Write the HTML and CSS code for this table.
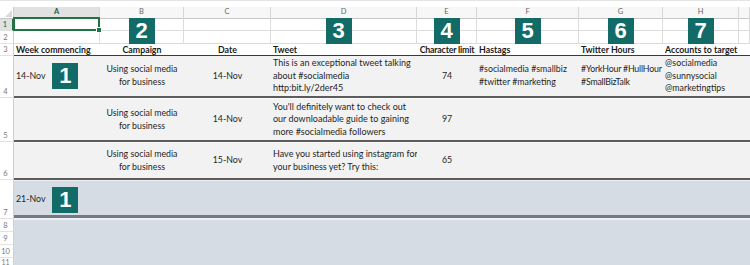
FILE: index.html
```html
<!DOCTYPE html>
<html>
<head>
<meta charset="utf-8">
<link rel="stylesheet" href="styles.css">
</head>
<body>
<div class="sheet">
  <div class="topband"></div>
  <div class="row colhead">
    <div class="corner"><span class="tri"></span></div>
    <div class="ch active">A</div>
    <div class="ch">B</div>
    <div class="ch">C</div>
    <div class="ch">D</div>
    <div class="ch">E</div>
    <div class="ch">F</div>
    <div class="ch">G</div>
    <div class="ch">H</div>
    <div class="ch"></div>
  </div>
  <div class="row r1">
    <div class="rh active">1</div>
    <div class="c sel"></div>
    <div class="c"><span class="badge over">2</span></div>
    <div class="c"></div>
    <div class="c"><span class="badge over shift">3</span></div>
    <div class="c"><span class="badge over">4</span></div>
    <div class="c"><span class="badge over">5</span></div>
    <div class="c"><span class="badge over">6</span></div>
    <div class="c"><span class="badge over">7</span></div>
    <div class="c"></div>
  </div>
  <div class="row r2">
    <div class="rh">2</div>
    <div class="c"></div><div class="c"></div><div class="c"></div><div class="c"></div>
    <div class="c"></div><div class="c"></div><div class="c"></div><div class="c"></div><div class="c"></div>
  </div>
  <div class="row r3">
    <div class="rh">3</div>
    <div class="c">Week commencing</div>
    <div class="c mid">Campaign</div>
    <div class="c mid">Date</div>
    <div class="c">Tweet</div>
    <div class="c mid tight">Character limit</div>
    <div class="c">Hastags</div>
    <div class="c">Twitter Hours</div>
    <div class="c">Accounts to target</div>
    <div class="c"></div>
  </div>
  <div class="row data r4">
    <div class="rh">4</div>
    <div class="d week">14-Nov <span class="badge">1</span></div>
    <div class="d mid">Using social media<br>for business</div>
    <div class="d mid">14-Nov</div>
    <div class="d tweet">This is an exceptional tweet talking<br>about #socialmedia<br>http:bit.ly/2der45</div>
    <div class="d mid">74</div>
    <div class="d">#socialmedia #smallbiz<br>#twitter #marketing</div>
    <div class="d tight">#YorkHour #HullHour<br>#SmallBizTalk</div>
    <div class="d">@socialmedia<br>@sunnysocial<br>@marketingtips</div>
    <div class="d"></div>
  </div>
  <div class="row data r5">
    <div class="rh">5</div>
    <div class="d"></div>
    <div class="d mid">Using social media<br>for business</div>
    <div class="d mid">14-Nov</div>
    <div class="d tweet">You'll definitely want to check out<br>our downloadable guide to gaining<br>more #socialmedia followers</div>
    <div class="d mid">97</div>
    <div class="d"></div><div class="d"></div><div class="d"></div><div class="d"></div>
  </div>
  <div class="row data r6">
    <div class="rh">6</div>
    <div class="d"></div>
    <div class="d mid">Using social media<br>for business</div>
    <div class="d mid">15-Nov</div>
    <div class="d tweet">Have you started using instagram for<br>your business yet? Try this:</div>
    <div class="d mid">65</div>
    <div class="d"></div><div class="d"></div><div class="d"></div><div class="d"></div>
  </div>
  <div class="row blue r7">
    <div class="rh">7</div>
    <div class="b week">21-Nov <span class="badge">1</span></div>
    <div class="b"></div><div class="b"></div><div class="b"></div><div class="b"></div>
    <div class="b"></div><div class="b"></div><div class="b"></div><div class="b"></div>
  </div>
  <div class="row blue small first">
    <div class="rh">8</div><div class="b wide"></div>
  </div>
  <div class="row blue small">
    <div class="rh">9</div><div class="b wide"></div>
  </div>
  <div class="row blue small">
    <div class="rh">10</div><div class="b wide"></div>
  </div>
  <div class="row blue small last">
    <div class="rh">11</div><div class="b wide"></div>
  </div>
</div>
</body>
</html>
```
FILE: styles.css
```css
* { box-sizing: border-box; margin: 0; padding: 0; }
html, body { width: 750px; height: 265px; overflow: hidden; background: #fff; }
body {
  font-family: Lato, "Liberation Sans", sans-serif;
  color: #1f1f1f;
}
.sheet { display: flex; flex-direction: column; }
.topband { height: 7px; border-top: 1px solid #e4e4e4; background: #fff; }
.row {
  display: grid;
  grid-template-columns: 14px 86px 84px 87px 146px 60px 102px 84px 76px 11px;
}
/* column header */
.colhead { height: 11px; }
.corner {
  position: relative;
  background: #fff;
  border-right: 1px solid #d0d0d0;
  border-bottom: 1px solid #c8c8c8;
}
.tri {
  position: absolute; right: 1px; bottom: 1px;
  width: 0; height: 0;
  border-left: 7px solid transparent;
  border-bottom: 7px solid #d9d9d9;
}
.ch {
  background: #f7f7f7;
  border-right: 1px solid #d6d6d6;
  border-bottom: 1px solid #c8c8c8;
  font-size: 7.5px;
  line-height: 10px;
  color: #666;
  text-align: center;
}
.ch.active {
  background: #e1e1e1;
  color: #1f5f3a;
  font-weight: bold;
  border-bottom: 2px solid #217346;
}
/* row header */
.rh {
  background: #fff;
  border-right: 1px solid #cfcfcf;
  border-bottom: 1px solid #e2e2e2;
  font-size: 7.5px;
  line-height: 11px;
  color: #777;
  display: flex;
  align-items: flex-end;
  justify-content: center;
  padding-right: 2px;
}
.rh.active {
  background: #e1e1e1;
  color: #1f5f3a;
  border-right: 2px solid #217346;
}
.last .rh { align-items: flex-start; line-height: 8px; font-size: 7px; }
/* light rows */
.r1, .r2 { height: 13px; }
.r3 { height: 12px; }
.c {
  position: relative;
  border-right: 1px solid #dcdcdc;
  border-bottom: 1px solid #dcdcdc;
  font-size: 8.8px;
  line-height: 10px;
  padding: 0 2px;
  display: flex;
  align-items: flex-end;
  white-space: nowrap;
}
.r3 .c {
  font-weight: bold;
  border-right: none;
  border-bottom: 1px solid #3a3a3a;
  color: #1a1a1a;
}
.c.mid, .d.mid { justify-content: center; text-align: center; }
.tight { letter-spacing: -0.2px; }
.sel::before {
  content: "";
  position: absolute;
  left: -1px; top: -1px; right: -1px; bottom: -1px;
  border: 2px solid #217346;
  z-index: 3;
}
.sel::after {
  content: "";
  position: absolute;
  right: -3px; bottom: -3px;
  width: 4px; height: 4px;
  background: #217346;
  border: 1px solid #fff;
  z-index: 4;
}
.badge {
  width: 26px;
  height: 26px;
  background: #136b67;
  color: #fff;
  font-family: "Liberation Sans", Arial, sans-serif;
  font-weight: bold;
  font-size: 22px;
  line-height: 26px;
  display: inline-flex;
  align-items: center;
  justify-content: center;
}
.badge.over {
  position: absolute;
  top: 0;
  left: 50%;
  transform: translateX(-50%);
  z-index: 2;
}
.badge.shift { left: calc(50% - 5px); }
/* data rows */
.r4 { height: 42px; }
.r5 { height: 44px; }
.r6 { height: 38px; }
.r7 { height: 39px; }
.small { height: 13px; }
.d, .b {
  font-size: 8.8px;
  line-height: 12.6px;
  padding: 0 2px;
  display: flex;
  align-items: center;
  white-space: nowrap;
}
.d.tweet { font-size: 9px; padding-right: 0; }
.d {
  background: #f2f2f2;
  border-bottom: 2px solid #5c5c5c;
}
.r5 .d, .r6 .d { border-top: 1px solid #fbfbfb; }
.b { background: #d6dce4; }
.r7 .b {
  border-top: 1px solid #eef0f3;
  border-bottom: 1px solid #eef0f3;
  box-shadow: inset 0 -3px 0 #737884;
}
.first .b { border-top: 1px solid #eef0f3; }
.b.wide { grid-column: 2 / -1; }
.week { gap: 7px; }
.week .badge { flex: none; }
```
